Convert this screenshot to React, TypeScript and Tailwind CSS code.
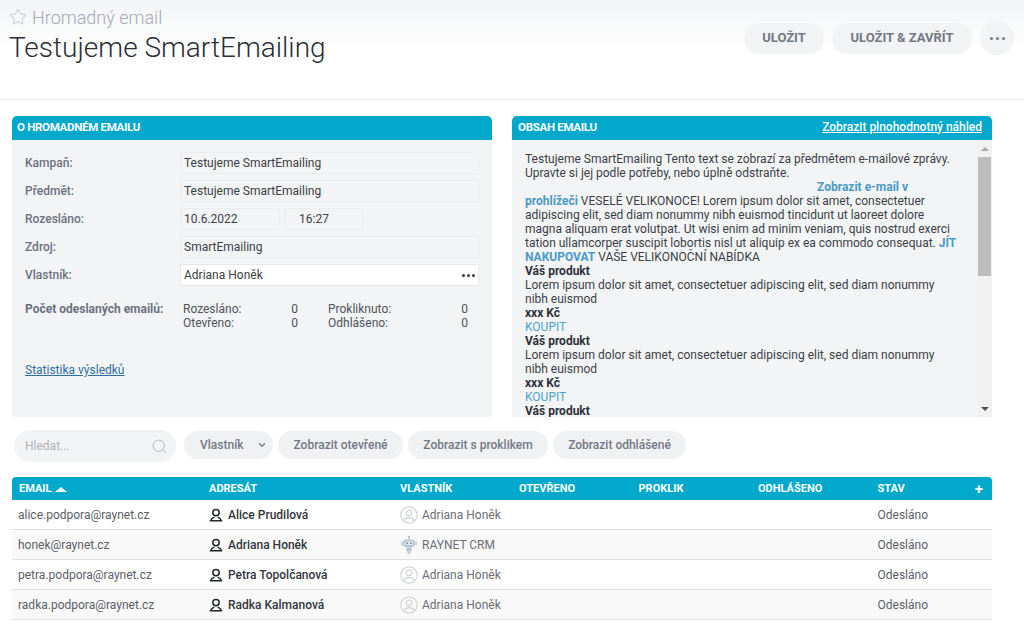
import React from "react";
import { Search, ChevronDown, Star } from "lucide-react";

function Field({ label, value }: { label: string; value: string }) {
  return (
    <div className="flex h-[22px] items-center">
      <div className="w-[168px] pl-[13px] text-[12px] font-medium text-[#6b7280]">{label}</div>
      <div className="flex h-[22px] w-[299px] items-center border border-[#ebedf0] pl-[3px] text-[12px] text-[#3c3f46]">{value}</div>
    </div>
  );
}

function PersonIcon() {
  return (
    <svg width="14" height="14" viewBox="0 0 14 14" fill="none" stroke="#23262b" strokeWidth="1.5" className="shrink-0">
      <circle cx="7" cy="4.600" r="3.200" />
      <path d="M1.800 12.400c.4-2 2.200-2.800 3.600-3.300M12.200 12.400c-.4-2-2.200-2.800-3.600-3.300M.8 12.800h12.400" />
    </svg>
  );
}

function AvatarIcon() {
  return (
    <svg width="18" height="18" viewBox="0 0 18 18" fill="none" stroke="#d2d4d8" strokeWidth="1.200" className="shrink-0">
      <circle cx="9" cy="9" r="8.200" />
      <circle cx="9" cy="7" r="2.800" />
      <path d="M3.800 14.600c1-2.200 3-2.900 5.200-2.900s4.200.7 5.200 2.900" />
    </svg>
  );
}

function RobotIcon() {
  return (
    <svg width="18" height="20" viewBox="0 0 18 20" className="shrink-0">
      <circle cx="9" cy="1.800" r="1.100" fill="#aab8c6" />
      <rect x="8.500" y="2.500" width="1" height="2" fill="#aab8c6" />
      <rect x="3" y="4.500" width="12" height="7.500" rx="3.500" fill="#b4c4d2" />
      <rect x="4.800" y="6.300" width="8.400" height="3.800" rx="1.900" fill="#e6edf2" />
      <circle cx="7.200" cy="8.200" r="1" fill="#7d8fa0" />
      <circle cx="10.800" cy="8.200" r="1" fill="#7d8fa0" />
      <rect x="1" y="6.500" width="1.600" height="4" rx=".8" fill="#c2ced9" />
      <rect x="15.400" y="6.500" width="1.600" height="4" rx=".8" fill="#c2ced9" />
      <path d="M6 12.500h6l-.8 4H6.800z" fill="#b4c4d2" />
      <rect x="7.500" y="16.500" width="3" height="2.500" fill="#c2ced9" />
    </svg>
  );
}

const rows = [
  ["alice.podpora@raynet.cz", "Alice Prudilová", "Adriana Honěk", false],
  ["honek@raynet.cz", "Adriana Honěk", "RAYNET CRM", true],
  ["petra.podpora@raynet.cz", "Petra Topolčanová", "Adriana Honěk", false],
  ["radka.podpora@raynet.cz", "Radka Kalmanová", "Adriana Honěk", false],
] as const;

function Product() {
  return (
    <>
      <div className="font-bold text-[#2e3138]">Váš produkt</div>
      <div>Lorem ipsum dolor sit amet, consectetuer adipiscing elit, sed diam nonummy nibh euismod</div>
      <div className="font-bold text-[#2e3138]">xxx Kč</div>
      <div className="text-[#4aa3cf]">KOUPIT</div>
    </>
  );
}

function Pill({ children, w }: { children: React.ReactNode; w: string }) {
  return (
    <div className={`mt-[1px] flex h-[28px] items-center justify-center rounded-full bg-[#f0f1f3] text-[12px] font-medium text-[#737885] ${w}`}>
      {children}
    </div>
  );
}

export default function App() {
  return (
    <div className="h-[630px] w-[1024px] overflow-hidden bg-white font-['Roboto',sans-serif]">
      <header className="flex h-[100px] items-start justify-between border-b border-[#e6e6e6] bg-gradient-to-b from-[#f2f3f5] to-white to-50% pl-[9px] pr-[10px]">
        <div>
          <div className="mt-[7px] flex h-[20px] items-center gap-[5px]">
            <Star size={18} strokeWidth={1.500} className="text-[#cfd1d6]" />
            <span className="text-[18px] font-light text-[#a3a9b5]">Hromadný email</span>
          </div>
          <h1 className="mt-[3px] text-[28px] font-light leading-[36px] text-[#2b2e34]">Testujeme SmartEmailing</h1>
        </div>
        <div className="mt-[21px] flex items-center gap-2">
          <div className="flex h-[31px] w-[80px] items-center justify-center rounded-full bg-[#f2f3f4] text-[13px] font-bold text-[#737885]">ULOŽIT</div>
          <div className="flex h-[31px] w-[140px] items-center justify-center rounded-full bg-[#f2f3f4] text-[13px] font-bold text-[#737885]">ULOŽIT &amp; ZAVŘÍT</div>
          <div className="flex h-[34px] w-[34px] items-center justify-center gap-[3px] rounded-full bg-[#f2f3f4]">
            <i className="h-[3px] w-[3px] rounded-full bg-[#737885]" />
            <i className="h-[3px] w-[3px] rounded-full bg-[#737885]" />
            <i className="h-[3px] w-[3px] rounded-full bg-[#737885]" />
          </div>
        </div>
      </header>

      <div className="mt-[16px] flex gap-[20px] pl-[12px]">
        <section className="h-[301px] w-[480px] overflow-hidden rounded-t-[5px] rounded-b-[2px] bg-[#f3f4f6]">
          <div className="flex h-[24px] items-center bg-[#00a9cb] pl-[5px] text-[11.500px] font-bold tracking-[-0.3px] text-white">O HROMADNÉM EMAILU</div>
          <div className="mt-[12px] flex flex-col gap-[6px]">
            <Field label="Kampaň:" value="Testujeme SmartEmailing" />
            <Field label="Předmět:" value="Testujeme SmartEmailing" />
            <div className="flex h-[22px] items-center">
              <div className="w-[168px] pl-[13px] text-[12px] font-medium text-[#6b7280]">Rozesláno:</div>
              <div className="flex h-[22px] w-[100px] items-center border border-[#ebedf0] pl-[3px] text-[12px] text-[#3c3f46]">10.6.2022</div>
              <div className="ml-[4px] flex h-[22px] w-[79px] items-center border border-[#ebedf0] pl-[14px] text-[12px] text-[#3c3f46]">16:27</div>
            </div>
            <Field label="Zdroj:" value="SmartEmailing" />
            <div className="flex h-[22px] items-center">
              <div className="w-[168px] pl-[13px] text-[12px] font-medium text-[#6b7280]">Vlastník:</div>
              <div className="flex h-[22px] w-[299px] items-center justify-between border border-[#e6e8eb] bg-white pl-[3px] pr-[3px] text-[12px] text-[#3c3f46]">
                <span>Adriana Honěk</span>
                <span className="flex gap-[2px]">
                  <i className="h-[3px] w-[3px] rounded-full bg-[#3c3f46]" />
                  <i className="h-[3px] w-[3px] rounded-full bg-[#3c3f46]" />
                  <i className="h-[3px] w-[3px] rounded-full bg-[#3c3f46]" />
                </span>
              </div>
            </div>
          </div>
          <div className="mt-[16px] flex text-[12px] leading-[14px]">
            <div className="w-[171px] pl-[13px] font-bold text-[#6b7280]">Počet odeslaných emailů:</div>
            <div className="grid w-[285px] grid-cols-[100px_15px_30px_110px_30px] text-[#4f535b]">
              <span>Rozesláno:</span><span className="text-right">0</span><span /><span>Prokliknuto:</span><span className="text-right">0</span>
              <span>Otevřeno:</span><span className="text-right">0</span><span /><span>Odhlášeno:</span><span className="text-right">0</span>
            </div>
          </div>
          <div className="mt-[33px] pl-[13px] text-[12px] leading-[14px] text-[#2f6f9f] underline">Statistika výsledků</div>
        </section>

        <section className="h-[301px] w-[480px] overflow-hidden rounded-t-[5px] rounded-b-[2px] bg-[#f3f4f6]">
          <div className="flex h-[24px] items-center justify-between bg-[#00a9cb] pl-[6px] pr-[10px] text-white">
            <span className="text-[11.500px] font-bold tracking-[-0.3px]">OBSAH EMAILU</span>
            <span className="mb-[3px] text-[12px] font-medium underline">Zobrazit plnohodnotný náhled</span>
          </div>
          <div className="flex h-[277px]">
            <div className="h-[277px] w-[465px] overflow-hidden pl-[13px] pr-[20px] pt-[12px] text-[12px] leading-[14px] text-[#3c3f46]">
              <div>Testujeme SmartEmailing Tento text se zobrazí za předmětem e-mailové zprávy. Upravte si jej podle potřeby, nebo úplně odstraňte.</div>
              <div className="h-[14px] whitespace-nowrap pl-[292px] font-bold text-[#4a9bc7]">Zobrazit e-mail v</div>
              <div>
                <span className="font-bold text-[#4a9bc7]">prohlížeči</span> VESELÉ VELIKONOCE! Lorem ipsum dolor sit amet, consectetuer adipiscing elit, sed diam nonummy nibh euismod tincidunt ut laoreet dolore magna aliquam erat volutpat. Ut wisi enim ad minim veniam, quis nostrud exerci tation ullamcorper suscipit lobortis nisl ut aliquip ex ea commodo consequat. <span className="font-bold text-[#4a9bc7]">JÍT NAKUPOVAT</span> VAŠE VELIKONOČNÍ NABÍDKA
              </div>
              <Product />
              <Product />
              <Product />
            </div>
            <div className="flex w-[15px] flex-col items-center bg-[#f1f1f1]">
              <div className="flex h-[17px] items-center justify-center">
                <div className="h-0 w-0 border-x-[4px] border-b-[4px] border-x-transparent border-b-[#a8a8a8]" />
              </div>
              <div className="h-[119px] w-[13px] bg-[#bdbdbd]" />
              <div className="flex-1" />
              <div className="flex h-[17px] items-center justify-center">
                <div className="h-0 w-0 border-x-[4px] border-t-[4px] border-x-transparent border-t-[#505050]" />
              </div>
            </div>
          </div>
        </section>
      </div>

      <div className="mt-[13px] flex items-start gap-[5px] pl-[14px]">
        <div className="mr-[3px] flex h-[32px] w-[162px] items-center justify-between rounded-full bg-[#f2f3f4] pl-[11px] pr-[8px] text-[12px] text-[#b0b3ba]">
          <span>Hledat...</span>
          <Search size={17} strokeWidth={1.400} className="text-[#b3b5ba]" />
        </div>
        <Pill w="w-[89px] justify-start pl-[16px] gap-[13px]">
          <span>Vlastník</span>
          <ChevronDown size={10} strokeWidth={3} />
        </Pill>
        <Pill w="w-[125px]">Zobrazit otevřené</Pill>
        <Pill w="w-[140px]">Zobrazit s proklikem</Pill>
        <Pill w="w-[133px]">Zobrazit odhlášené</Pill>
      </div>

      <div className="ml-[12px] mt-[15px] w-[980px]">
        <div className="flex h-[23px] items-center rounded-t-[4px] bg-[#00a9cb] pt-[1px] text-[11px] font-bold text-white">
          <div className="flex w-[191px] items-center gap-[4px] pl-[7px]">
            EMAIL
            <span className="h-0 w-0 border-x-[6px] border-b-[5px] border-x-transparent border-b-white" />
          </div>
          <div className="w-[191px] pl-[6px]">ADRESÁT</div>
          <div className="w-[119px] pl-[6px]">VLASTNÍK</div>
          <div className="w-[119.500px] pl-[6px]">OTEVŘENO</div>
          <div className="w-[119.500px] pl-[6px]">PROKLIK</div>
          <div className="w-[119.500px] pl-[6px]">ODHLÁŠENO</div>
          <div className="flex flex-1 items-center justify-between pl-[6px] pr-[9px]">
            <span>STAV</span>
            <span className="text-[15px] leading-none">+</span>
          </div>
        </div>
        {rows.map(([email, name, owner, bot], i) => (
          <div key={email} className={`flex h-[30px] items-center border-b border-[#e2e2e2] text-[12px] ${i % 2 ? "bg-[#f9f9f9]" : "bg-white"}`}>
            <div className="w-[191px] pl-[6px] text-[#5d6068]">{email}</div>
            <div className="flex w-[191px] items-center gap-[5px] pl-[6px] font-medium text-[#33363c]">
              <PersonIcon />
              {name}
            </div>
            <div className="flex w-[477.500px] items-center gap-[4px] pl-[6px] text-[#6b6e76]">
              {bot ? <RobotIcon /> : <AvatarIcon />}
              {owner}
            </div>
            <div className="flex-1 pl-[6px] text-[#5d6068]">Odesláno</div>
          </div>
        ))}
      </div>
    </div>
  );
}
